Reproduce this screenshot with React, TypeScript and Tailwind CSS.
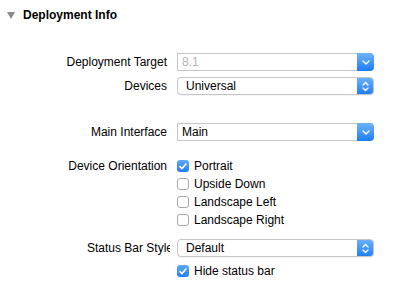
import { ReactNode } from 'react';

function ChevronDown() {
    return (
        <svg width="8" height="5" viewBox="0 0 8 5" fill="none">
            <path d="M1 1 L4 4 L7 1" stroke="white" strokeWidth="1.4" strokeLinecap="round" strokeLinejoin="round" />
        </svg>
    );
}

function ChevronUpDown() {
    return (
        <svg width="7" height="11" viewBox="0 0 7 11" fill="none">
            <path d="M1 4 L3.5 1.5 L6 4" stroke="white" strokeWidth="1.3" strokeLinecap="round" strokeLinejoin="round" />
            <path d="M1 7 L3.5 9.5 L6 7" stroke="white" strokeWidth="1.3" strokeLinecap="round" strokeLinejoin="round" />
        </svg>
    );
}

function ComboBox({ value, disabled }: { value: string; disabled?: boolean }) {
    return (
        <div className="flex h-[18px] w-[197px]">
            <div className={`flex-1 flex items-center pl-[4px] border border-[#c6c6c6] border-r-0 bg-white ${disabled ? 'text-[#b4b4b4]' : 'text-black'}`}>
                {value}
            </div>
            <div className="w-[17px] flex items-center justify-center rounded-r-[4px] bg-gradient-to-b from-[#6cb3fa] to-[#1a7bf6]">
                <ChevronDown />
            </div>
        </div>
    );
}

function PopUp({ value }: { value: string }) {
    return (
        <div className="flex h-[18px] w-[197px] rounded-[4px] border border-[#c6c6c6] bg-white overflow-hidden shadow-[0_0.5px_0.5px_rgba(0,0,0,0.08)]">
            <div className="flex-1 flex items-center pl-[8px] text-black">{value}</div>
            <div className="w-[17px] -my-px -mr-px flex items-center justify-center rounded-r-[4px] bg-gradient-to-b from-[#6cb3fa] to-[#1a7bf6]">
                <ChevronUpDown />
            </div>
        </div>
    );
}

function Checkbox({ label, checked }: { label: string; checked?: boolean }) {
    return (
        <div className="flex items-center h-[18px] gap-[5px]">
            {checked ? (
                <div className="w-[12px] h-[12px] rounded-[3px] bg-gradient-to-b from-[#5eaaf9] to-[#1d7df5] flex items-center justify-center">
                    <svg width="8" height="7" viewBox="0 0 8 7" fill="none">
                        <path d="M1 3.6 L3 5.6 L7 1" stroke="white" strokeWidth="1.6" strokeLinecap="round" strokeLinejoin="round" />
                    </svg>
                </div>
            ) : (
                <div className="w-[12px] h-[12px] rounded-[3px] border border-[#a9a9a9] bg-white" />
            )}
            <span className="text-black">{label}</span>
        </div>
    );
}

function Row({ label, children, className = '' }: { label?: string; children: ReactNode; className?: string }) {
    return (
        <div className={`flex ${className}`}>
            <div className="w-[167px] h-[18px] flex items-center justify-end text-black whitespace-nowrap">{label}</div>
            <div className="ml-[10px]">{children}</div>
        </div>
    );
}

export default function App() {
    return (
        <div className="w-[410px] h-[298px] bg-white font-['Liberation_Sans',sans-serif] text-[12px] leading-none">
            <div className="flex items-center h-[30px] pl-[7px] gap-[8px]">
                <svg width="8" height="7" viewBox="0 0 8 7">
                    <path d="M0 0 H8 L4 7 Z" fill="#8a8a8a" />
                </svg>
                <span className="font-bold text-[12px] text-black">Deployment Info</span>
            </div>

            <Row label="Deployment Target" className="mt-[23px]">
                <ComboBox value="8.1" disabled />
            </Row>
            <Row label="Devices" className="mt-[6px]">
                <PopUp value="Universal" />
            </Row>

            <Row label="Main Interface" className="mt-[28px]">
                <ComboBox value="Main" />
            </Row>

            <Row label="Device Orientation" className="mt-[16px]">
                <div className="flex flex-col">
                    <Checkbox label="Portrait" checked />
                    <Checkbox label="Upside Down" />
                    <Checkbox label="Landscape Left" />
                    <Checkbox label="Landscape Right" />
                </div>
            </Row>

            <div className="flex mt-[10px]">
                <div className="w-[170px] h-[18px] flex items-center overflow-hidden text-black whitespace-nowrap pl-[87px]">Status Bar Style</div>
                <div className="ml-[7px]">
                    <PopUp value="Default" />
                </div>
            </div>
            <Row className="mt-[5px]">
                <Checkbox label="Hide status bar" checked />
            </Row>
        </div>
    );
}
